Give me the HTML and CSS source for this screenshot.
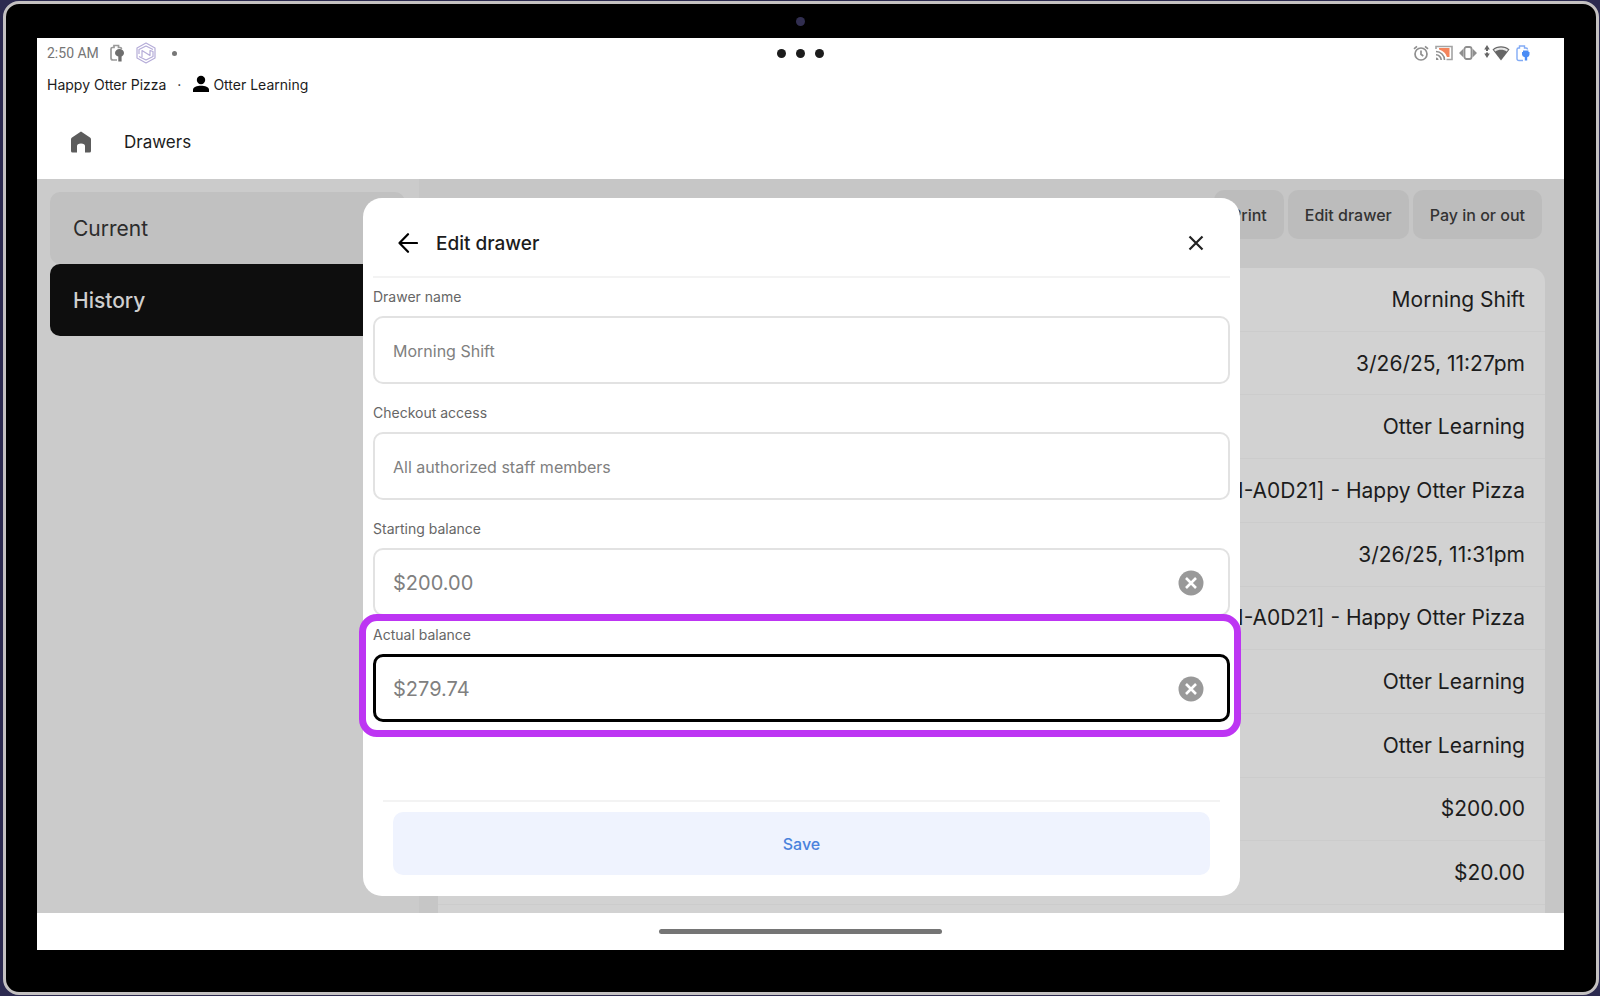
FILE: index.html
```html
<!DOCTYPE html>
<html lang="en">
<head>
<meta charset="utf-8">
<meta name="viewport" content="width=device-width, initial-scale=1">
<title>Drawers</title>
<link rel="stylesheet" href="styles.css">
</head>
<body>
<div class="device">
  <div class="bezel-top"><span class="camera"></span></div>
  <div class="screen">
    <div class="status-bar">
      <div class="status-left">
        <time>2:50 AM</time>
        <svg class="icon-saver" width="14" height="18" viewBox="0 0 14 18" fill="none"><path d="M7 16H3Q1 16 1 14V5Q1 3.500 2.500 3.500H4V1.500H8.500V3.500H10Q11.500 3.500 11.500 5" stroke="#9a9a9a" stroke-width="1.700"/><path d="M9.500 5C12.300 5 14 6.800 14 9C14 11 12.500 11.800 11.600 12.500V17.500H8.300V12.500C6.500 11.800 5 11 5 9C5 6.800 7 5 9.500 5Z" fill="#6e6e6e"/></svg>
        <svg class="icon-hex" width="22" height="22" viewBox="0 0 22 22" fill="none" stroke="#b5acd8" stroke-width="1.200" stroke-linejoin="round"><path d="M11 1L20 6V16L11 21L2 16V6Z"/><path d="M18 7.500L11 4L4 7.500V12M7 15V8.500L15 13.500V8.500L18 9.500V14.500L11 18L4 14.500"/></svg>
        <span class="status-dot"></span>
      </div>
      <div class="window-dots"><i></i><i></i><i></i></div>
      <div class="status-right">
        <svg width="16" height="16" viewBox="0 0 16 16" fill="none" stroke="#8f8f8f" stroke-width="1.700"><circle cx="8" cy="9" r="6"/><path d="M8 5.500V9.300L10.300 11M1 3.800L4 1.300M15 3.800L12 1.300"/></svg>
        <svg class="icon-cast" width="18" height="16" viewBox="0 0 18 16" fill="none"><path d="M4 3H14.500V12H12Q10.500 6.500 4 4.500Z" fill="#f4845c"/><path d="M1 4V1.500H17V14.500H11.500" stroke="#a3a3a3" stroke-width="1.600"/><path d="M1 6.500A8.500 8.500 0 0 1 9.500 15M1 9.800A5.200 5.200 0 0 1 6.200 15" stroke="#8f8f8f" stroke-width="1.600"/><path d="M1 12.500A2.500 2.500 0 0 1 3.500 15H1Z" fill="#8f8f8f"/></svg>
        <svg class="icon-vibrate" width="18" height="14" viewBox="0 0 18 14" fill="none"><rect x="5.500" y="1" width="7" height="12" rx="2" stroke="#8f8f8f" stroke-width="1.800"/><path d="M4.500 2.500V11.500L0 7ZM13.500 2.500V11.500L18 7Z" fill="#8f8f8f"/></svg>
        <svg class="icon-updown" width="6" height="16" viewBox="0 0 6 16" fill="#666"><path d="M3 0L5.800 4.500H4V6H2V4.500H.2ZM3 13L.2 8.500H2V7.500H4V8.500H5.800Z"/></svg>
        <svg class="icon-wifi" width="18" height="16" viewBox="0 0 18 16"><path d="M9 15.500L0.500 4.500C5 .3 13 .3 17.500 4.500Z" fill="#666"/><path d="M2 4.800C6 1.800 12 1.800 16 4.800L14.800 6.400C11.500 4.300 6.500 4.300 3.200 6.400Z" fill="#e6e6e6"/></svg>
        <svg width="14" height="18" viewBox="0 0 14 18" fill="none"><path d="M7 16.500H3Q1 16.500 1 14.500V5.500Q1 4 2.500 4H3.500V2H8.500V4H10Q11.500 4 11.500 5.500" stroke="#82abf5" stroke-width="1.400"/><path d="M7 6.500H12.500V8H13.500V10.500Q13.500 12.500 11.200 13.300V16.500H8.800V13.300Q6 12.500 6 10.500V8H7Z" fill="#4b8cf5"/></svg>
      </div>
    </div>
    <div class="account-bar">
      <span>Happy Otter Pizza</span><span class="separator">·</span>
      <span class="user"><svg width="18" height="18" viewBox="0 0 18 18"><circle cx="9" cy="5" r="4.200"/><path d="M1 17V14.500C1 12 5 10.700 9 10.700S17 12 17 14.500V17Z"/></svg>Otter Learning</span>
    </div>
    <header class="app-bar">
      <a class="home" href="#" aria-label="Home"><svg width="22" height="22" viewBox="0 0 22 22"><path d="M11 .5L20 6.500Q21 7.200 21 8.500V20Q21 21.500 19.500 21.500H15V15Q15 12.500 11 12.500T7 15V21.500H2.500Q1 21.500 1 20V8.500Q1 7.200 2 6.500Z" fill="#5c5c5c"/></svg></a>
      <h1>Drawers</h1>
    </header>
    <div class="workspace">
      <nav class="sidebar">
        <a class="tab" href="#">Current</a>
        <a class="tab tab-active" href="#" aria-current="page">History</a>
      </nav>
      <main class="detail">
        <div class="actions">
          <button type="button">Print</button>
          <button type="button">Edit drawer</button>
          <button type="button">Pay in or out</button>
        </div>
        <ul class="summary">
          <li>Morning Shift</li>
          <li>3/26/25, 11:27pm</li>
          <li>Otter Learning</li>
          <li>N-A0D21] - Happy Otter Pizza</li>
          <li>3/26/25, 11:31pm</li>
          <li>N-A0D21] - Happy Otter Pizza</li>
          <li>Otter Learning</li>
          <li>Otter Learning</li>
          <li>$200.00</li>
          <li>$20.00</li>
        </ul>
      </main>
      <div class="overlay">
        <form class="dialog" role="dialog" aria-labelledby="dialog-title">
          <div class="dialog-head">
            <button type="button" class="icon-button" aria-label="Back"><svg width="20" height="20" viewBox="0 0 20 20" fill="none" stroke="#000" stroke-width="2.200" stroke-linecap="round" stroke-linejoin="round"><path d="M19 10H1.500M10 1.200L1.500 10L10 18.800"/></svg></button>
            <h2 id="dialog-title">Edit drawer</h2>
            <button type="button" class="icon-button" aria-label="Close"><svg width="16" height="16" viewBox="0 0 16 16" fill="none" stroke="#222" stroke-width="2.200"><path d="M1.500 1.500L14.500 14.500M14.500 1.500L1.500 14.500"/></svg></button>
          </div>
          <div class="field">
            <label for="name">Drawer name</label>
            <div class="control"><input id="name" type="text" value="Morning Shift"></div>
          </div>
          <div class="field">
            <label for="access">Checkout access</label>
            <div class="control"><input id="access" type="text" value="All authorized staff members"></div>
          </div>
          <div class="field field-money">
            <label for="starting">Starting balance</label>
            <div class="control"><input id="starting" type="text" value="$200.00"><button type="button" class="icon-button" aria-label="Clear starting balance"><svg width="26" height="26" viewBox="0 0 26 26"><circle cx="13" cy="13" r="12.500" fill="#999"/><path d="M8 8L18 18M18 8L8 18" stroke="#fff" stroke-width="2.600"/></svg></button></div>
          </div>
          <div class="field field-money field-current">
            <label for="actual">Actual balance</label>
            <div class="control"><input id="actual" type="text" value="$279.74"><button type="button" class="icon-button" aria-label="Clear actual balance"><svg width="26" height="26" viewBox="0 0 26 26"><circle cx="13" cy="13" r="12.500" fill="#999"/><path d="M8 8L18 18M18 8L8 18" stroke="#fff" stroke-width="2.600"/></svg></button></div>
          </div>
          <div class="dialog-foot"><button type="submit" class="save">Save</button></div>
        </form>
      </div>
    </div>
    <div class="gesture-bar"><span></span></div>
  </div>
</div>
</body>
</html>
```
FILE: styles.css
```css
* { box-sizing: border-box; }

body {
  margin: 0;
  min-height: 100vh;
  display: flex;
  padding: 1px 1px 1px 3px;
  background: #2c2a50;
  font-family: Inter, "Liberation Sans", sans-serif;
  color: #1c1c1c;
}

h1, h2, ul { margin: 0; padding: 0; font-weight: 400; }
ul { list-style: none; }
a { color: inherit; text-decoration: none; }
svg { display: block; flex: none; }
button, input { font: inherit; color: inherit; border: 0; margin: 0; }
button { cursor: pointer; }

.device {
  flex: 1;
  display: flex;
  flex-direction: column;
  padding: 0 32px 42px 31px;
  border: 3px solid #c4c1c1;
  border-radius: 16px;
  background: #000;
}
.bezel-top { height: 34px; display: flex; align-items: center; justify-content: center; }
.camera { width: 9px; height: 9px; border-radius: 50%; background: #312e50; }

.screen { flex: 1; display: flex; flex-direction: column; background: #fff; }

.status-bar {
  height: 30px;
  padding: 0 34px 0 10px;
  display: grid;
  grid-template-columns: 1fr auto 1fr;
  align-items: center;
  font-family: Roboto, sans-serif;
  font-size: 14px;
  color: #757575;
}
.status-left, .status-right, .window-dots { display: flex; align-items: center; }
.status-left { gap: 11px; }
.status-dot { width: 5px; height: 5px; margin-left: 4px; border-radius: 50%; background: #777; }
.window-dots { gap: 10px; margin-left: 24px; }
.window-dots i { width: 9px; height: 9px; border-radius: 50%; background: #1c1c1c; }
.status-right { justify-content: flex-end; gap: 6px; }
.icon-updown { margin-left: 1px; margin-right: -4px; }

.account-bar {
  height: 34px;
  padding: 0 10px 2px;
  display: flex;
  align-items: center;
  gap: 11px;
  font-size: 14px;
}
.user { display: flex; align-items: center; gap: 3px; }

.app-bar { height: 77px; padding: 2px 33px 0; display: flex; align-items: center; gap: 32px; }
.app-bar h1 { font-size: 17px; }

.workspace { position: relative; flex: 1; display: flex; }

.sidebar { flex: 0 0 25%; padding: 13px 14px 0 13px; background: #cbcbcb; }
.tab {
  display: flex;
  align-items: center;
  height: 72px;
  padding: 0 23px;
  border-radius: 10px;
  background: #c1c1c1;
  font-size: 21px;
  color: #2c2c2c;
}
.tab-active { background: #0e0e0e; color: #cfcfcf; font-weight: 500; }

.detail {
  flex: 1;
  display: flex;
  flex-direction: column;
  gap: 29px;
  padding: 11px 19px 0;
  background: #c6c6c6;
}
.actions { display: flex; justify-content: flex-end; gap: 4px; padding-right: 3px; }
.actions button {
  height: 49px;
  padding: 0 17px;
  border-radius: 10px;
  background: #bcbcbc;
  font-size: 16px;
  font-weight: 500;
  color: #333;
}
.summary {
  flex: 1;
  display: grid;
  grid-template-rows: repeat(10, 1fr) 8px;
  border-radius: 14px 14px 0 0;
  background: #d2d2d2;
}
.summary li {
  display: flex;
  align-items: center;
  justify-content: flex-end;
  padding: 0 20px;
  border-bottom: 1px solid #cccccc;
  font-size: 21px;
}

.overlay { position: absolute; inset: 0; display: flex; padding: 19px 324px 17px 326px; }
.dialog {
  flex: 1;
  display: flex;
  flex-direction: column;
  padding: 0 10px 21px;
  border-radius: 19px;
  background: #fff;
}
.icon-button { padding: 0; background: none; }
.dialog-head {
  height: 80px;
  padding: 12px 26px 0 25px;
  display: flex;
  align-items: center;
  gap: 18px;
  border-bottom: 2px solid #f3f3f3;
}
.dialog-head h2 { flex: 1; font-size: 19px; font-weight: 500; }

.field label { display: block; height: 38px; padding-top: 10px; font-size: 14px; line-height: 18px; color: #666; }
.field + .field { margin-top: 10px; }
.control {
  height: 68px;
  display: flex;
  align-items: center;
  padding: 2px 24px 0 18px;
  border: 2px solid #e2e2e2;
  border-radius: 10px;
}
.control input { flex: 1; min-width: 0; padding: 0; background: none; outline: 0; font-size: 16px; color: #808080; }
.field-money input { font-size: 20px; }
.dialog .field-current {
  position: relative;
  margin-top: 0;
}
.field-current::after {
  content: "";
  position: absolute;
  inset: -2px -11px -15px -14px;
  border: 7px solid #bd35f3;
  border-radius: 18px;
  pointer-events: none;
}
.field-current .control { border: 3px solid #000; padding: 2px 23px 0 17px; }

.dialog-foot { margin: auto 10px 0; padding: 10px 10px 0; border-top: 2px solid #f3f3f3; }
.save {
  width: 100%;
  height: 63px;
  border-radius: 10px;
  background: #eff3fe;
  font-size: 16px;
  font-weight: 500;
  color: #4a82dc;
}

.gesture-bar { height: 37px; display: flex; align-items: center; justify-content: center; }
.gesture-bar span { width: 283px; height: 5px; border-radius: 3px; background: #757575; }
```
